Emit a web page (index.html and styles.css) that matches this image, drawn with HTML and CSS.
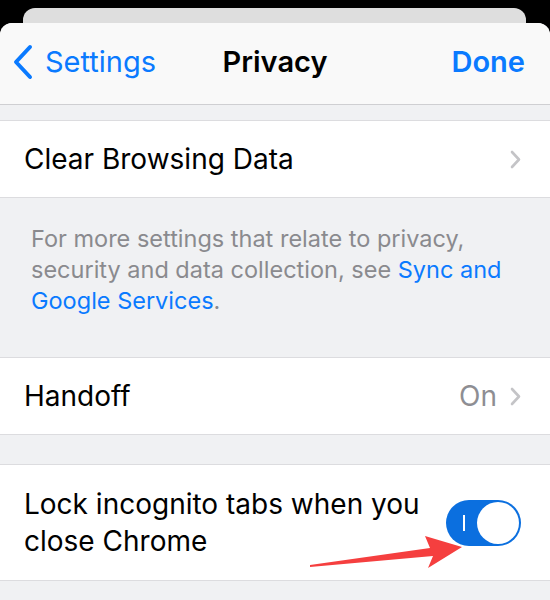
FILE: index.html
```html
<!DOCTYPE html>
<html lang="en">
<head>
  <meta charset="UTF-8" />
  <title>Privacy</title>
  <link rel="stylesheet" href="styles.css">
</head>
<body>

  <div class="back-card"></div>

  <div class="sheet">
    <div class="nav">
      <div class="nav-back">
        <svg class="back-chevron" width="22" height="36" viewBox="0 0 22 36">
          <path d="M18 3 L4 18 L18 33" fill="none" stroke="#0a7aff" stroke-width="4" stroke-linecap="round" stroke-linejoin="round"/>
        </svg>
        <span>Settings</span>
      </div>
      <div class="nav-title">Privacy</div>
      <div class="nav-done">Done</div>
    </div>

    <div class="gap-top"></div>

    <div class="group">
      <div class="row">
        <span class="row-label">Clear Browsing Data</span>
        <span class="chevron">
          <svg width="11" height="19" viewBox="0 0 11 19"><path d="M2 2 L9 9.5 L2 17" fill="none" stroke="#c4c4c7" stroke-width="2.6" stroke-linecap="round" stroke-linejoin="round"/></svg>
        </span>
      </div>
    </div>

    <p class="footer-note">
      For more settings that relate to privacy, security and data collection, see <span class="link">Sync and Google Services</span>.
    </p>

    <div class="group">
      <div class="row">
        <span class="row-label">Handoff</span>
        <span class="row-value">On</span>
        <span class="chevron">
          <svg width="11" height="19" viewBox="0 0 11 19"><path d="M2 2 L9 9.5 L2 17" fill="none" stroke="#c4c4c7" stroke-width="2.6" stroke-linecap="round" stroke-linejoin="round"/></svg>
        </span>
      </div>
    </div>

    <div class="gap-mid"></div>

    <div class="group">
      <div class="row row-tall">
        <span class="row-label">Lock incognito tabs when you close Chrome</span>
        <div class="toggle">
          <span class="toggle-mark"></span>
          <span class="toggle-knob"></span>
        </div>

        <!-- annotation arrow -->
        <svg class="arrow" width="170" height="60" viewBox="0 0 170 60">
          <polygon points="10,46 130,29 125,17 162,28 128,49 133,37 10,48" fill="#f53f3f"/>
        </svg>
      </div>
    </div>
  </div>

</body>
</html>
```

FILE: styles.css
```css
body {
  margin: 0;
  background: #000;
  font-family: Inter, "Noto Sans", sans-serif;
  height: 600px;
  overflow: hidden;
}
.back-card {
  height: 15px;
  margin: 8px 24px 0 23px;
  background: #dedede;
  border-radius: 12px 12px 0 0;
}
.sheet {
  background: #f0f1f3;
  border-radius: 12px 12px 0 0;
  height: 600px;
  overflow: hidden;
}
.nav {
  height: 82px;
  box-sizing: border-box;
  padding: 0 25px 4px;
  background: #f9f9f9;
  border-bottom: 1px solid #cfcfd2;
  display: grid;
  grid-template-columns: 1fr auto 1fr;
  align-items: center;
  font-size: 29px;
}
.nav-back {
  display: flex;
  align-items: center;
  gap: 11px;
  margin-left: -13px;
  color: #0a7aff;
}
.nav-title {
  font-weight: 600;
  color: #000;
}
.nav-done {
  text-align: right;
  font-weight: 600;
  color: #0a7aff;
}
.gap-top {
  height: 15px;
}
.gap-mid {
  height: 29px;
}
.group {
  background: #fff;
  border-top: 1px solid #dcdcdf;
  border-bottom: 1px solid #dcdcdf;
}
.row {
  height: 76px;
  display: flex;
  align-items: center;
  padding: 0 29px 0 24px;
  font-size: 28px;
  color: #000;
  position: relative;
}
.row-label {
  flex: 1;
}
.row-value {
  color: #8e8e93;
  margin-right: 13px;
}
.chevron {
  display: flex;
}
.row-tall {
  height: 115px;
}
.row-tall .row-label {
  flex: 0 0 405px;
  line-height: 37px;
}
.footer-note {
  margin: 0;
  padding: 25px 40px 41px 31px;
  font-size: 23.5px;
  line-height: 31px;
  color: #8a8a8e;
}
.link {
  color: #0a7aff;
}
.toggle {
  margin-left: auto;
  width: 75px;
  height: 46px;
  border-radius: 23px;
  background: #0b6fdf;
  display: flex;
  align-items: center;
  padding: 2px;
  box-sizing: border-box;
}
.toggle-mark {
  width: 2px;
  height: 16px;
  background: #fff;
  margin-left: 15px;
}
.toggle-knob {
  margin-left: auto;
  width: 42px;
  height: 42px;
  border-radius: 50%;
  background: #fff;
}
.arrow {
  position: absolute;
  left: 300px;
  top: 54px;
}
```
